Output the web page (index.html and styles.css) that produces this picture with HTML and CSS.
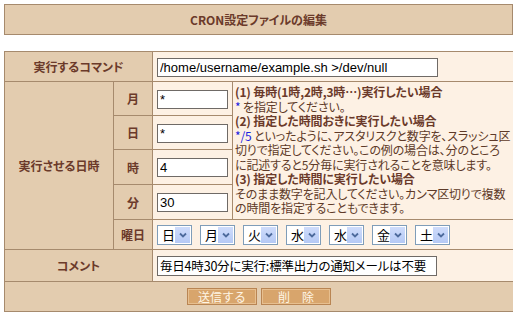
FILE: index.html
```html
<!DOCTYPE html>
<html lang="ja">
<head>
    <meta charset="UTF-8">
    <meta name="viewport" content="width=device-width, initial-scale=1.0">
    <title>CRON設定ファイルの編集</title>
    <link rel="stylesheet" href="styles.css">
</head>
<body>
    <div class="page-title">CRON設定ファイルの編集</div>

    <form class="cron-form">
        <table class="cron-table">
            <colgroup>
                <col class="col-label">
                <col class="col-sub">
                <col class="col-field">
                <col class="col-desc">
            </colgroup>
            <tr class="row-cmd">
                <th colspan="2">実行するコマンド</th>
                <td colspan="2"><input type="text" class="txt txt-cmd" value="/home/username/example.sh &gt;/dev/null"></td>
            </tr>
            <tr class="row-a">
                <th rowspan="5">実行させる日時</th>
                <th>月</th>
                <td><input type="text" class="txt txt-num" value="*"></td>
                <td rowspan="4" class="desc">
                    <b>(1) 毎時(1時,2時,3時…)実行したい場合</b><br>
                    <span class="hl">*</span> を指定してください。<br>
                    <b>(2) 指定した時間おきに実行したい場合</b><br>
                    <span class="hl">*/5</span> といったように、アスタリスクと数字を、スラッシュ区<br>切りで指定してください。この例の場合は、分のところ<br>に記述すると5分毎に実行されることを意味します。<br>
                    <b>(3) 指定した時間に実行したい場合</b><br>
                    そのまま数字を記入してください。カンマ区切りで複数<br>の時間を指定することもできます。
                </td>
            </tr>
            <tr class="row-a">
                <th>日</th>
                <td><input type="text" class="txt txt-num" value="*"></td>
            </tr>
            <tr class="row-b">
                <th>時</th>
                <td><input type="text" class="txt txt-num" value="4"></td>
            </tr>
            <tr class="row-b">
                <th>分</th>
                <td><input type="text" class="txt txt-num" value="30"></td>
            </tr>
            <tr class="row-dow">
                <th>曜日</th>
                <td colspan="2">
                    <div class="dow-list">
                        <span class="dow"><span class="dow-val">日</span><span class="dow-btn"><svg viewBox="0 0 8 6" width="8" height="6"><path d="M1 1.5 L4 4.5 L7 1.5" fill="none" stroke="#4d6a9c" stroke-width="1.8"/></svg></span></span>
                        <span class="dow"><span class="dow-val">月</span><span class="dow-btn"><svg viewBox="0 0 8 6" width="8" height="6"><path d="M1 1.5 L4 4.5 L7 1.5" fill="none" stroke="#4d6a9c" stroke-width="1.8"/></svg></span></span>
                        <span class="dow"><span class="dow-val">火</span><span class="dow-btn"><svg viewBox="0 0 8 6" width="8" height="6"><path d="M1 1.5 L4 4.5 L7 1.5" fill="none" stroke="#4d6a9c" stroke-width="1.8"/></svg></span></span>
                        <span class="dow"><span class="dow-val">水</span><span class="dow-btn"><svg viewBox="0 0 8 6" width="8" height="6"><path d="M1 1.5 L4 4.5 L7 1.5" fill="none" stroke="#4d6a9c" stroke-width="1.8"/></svg></span></span>
                        <span class="dow"><span class="dow-val">水</span><span class="dow-btn"><svg viewBox="0 0 8 6" width="8" height="6"><path d="M1 1.5 L4 4.5 L7 1.5" fill="none" stroke="#4d6a9c" stroke-width="1.8"/></svg></span></span>
                        <span class="dow"><span class="dow-val">金</span><span class="dow-btn"><svg viewBox="0 0 8 6" width="8" height="6"><path d="M1 1.5 L4 4.5 L7 1.5" fill="none" stroke="#4d6a9c" stroke-width="1.8"/></svg></span></span>
                        <span class="dow"><span class="dow-val">土</span><span class="dow-btn"><svg viewBox="0 0 8 6" width="8" height="6"><path d="M1 1.5 L4 4.5 L7 1.5" fill="none" stroke="#4d6a9c" stroke-width="1.8"/></svg></span></span>
                    </div>
                </td>
            </tr>
            <tr class="row-comment">
                <th colspan="2">コメント</th>
                <td colspan="2"><input type="text" class="txt txt-comment" value="毎日4時30分に実行:標準出力の通知メールは不要"></td>
            </tr>
            <tr class="row-actions">
                <td colspan="4">
                    <div class="actions">
                        <button type="button" class="btn">送信する</button>
                        <button type="button" class="btn">削　除</button>
                    </div>
                </td>
            </tr>
        </table>
    </form>
</body>
</html>
```

FILE: styles.css
```css
body {
    margin: 4px;
    background: #fff;
    font-family: "Noto Sans CJK JP", "DejaVu Sans", sans-serif;
    font-size: 12px;
    color: #5e3a28;
    font-feature-settings: "palt";
}
.page-title {
    height: 31px;
    box-sizing: border-box;
    border: 1px solid #a68a6d;
    background-color: #e3ccaf;
    color: #6b3a2a;
    font-weight: bold;
    display: flex;
    align-items: center;
    justify-content: center;
    margin-bottom: 16px;
}
.cron-form {
    margin: 0;
}
.cron-table {
    width: 509px;
    table-layout: fixed;
    border-collapse: collapse;
}
.col-label { width: 109px; }
.col-sub { width: 39px; }
.col-field { width: 80px; }
.col-desc { width: 281px; }
.cron-table th,
.cron-table td {
    border: 1px solid #a68a6d;
    padding: 0;
}
.cron-table th {
    background-color: #e3ccaf;
    color: #6b3a2a;
    font-weight: bold;
    text-align: center;
}
.cron-table td {
    background-color: #fdf1e4;
    padding-left: 4px;
}
.row-cmd { height: 30px; }
.row-a { height: 34px; }
.row-b { height: 35px; }
.row-dow { height: 30px; }
.row-comment { height: 32px; }
.row-actions { height: 30px; }
.cron-table td.desc {
    padding: 0 0 0 2px;
    line-height: 14.5px;
    letter-spacing: -0.15px;
    vertical-align: middle;
    white-space: nowrap;
}
.desc b {
    color: #6b3a2a;
}
.hl {
    color: #1a22e0;
}
.txt {
    box-sizing: border-box;
    height: 19px;
    margin: 0;
    padding: 0 2px;
    border: 1px solid #6f6a66;
    background: #fff;
    color: #000;
    font-family: "Liberation Sans", Arial, sans-serif;
    font-size: 13px;
    vertical-align: middle;
}
.txt-cmd { width: 281px; }
.txt-num { width: 71px; }
.txt-comment {
    width: 280px;
    height: 20px;
    font-family: "Noto Sans CJK JP", sans-serif;
    font-size: 12.5px;
    font-feature-settings: "palt";
    letter-spacing: -0.2px;
}
.dow-list {
    display: flex;
    gap: 8px;
}
.dow {
    box-sizing: border-box;
    width: 35px;
    height: 20px;
    border: 1px solid #7f9db9;
    background: #fff;
    display: flex;
    align-items: center;
    justify-content: space-between;
    padding: 1px;
}
.dow-val {
    color: #000;
    font-size: 13px;
    padding-left: 3px;
    font-weight: normal;
}
.dow-btn {
    width: 15px;
    height: 16px;
    background: linear-gradient(#cfdcfb, #b5c9f5);
    display: flex;
    align-items: center;
    justify-content: center;
}
.row-actions td {
    background-color: #e3ccaf;
    padding: 0;
}
.actions {
    display: flex;
    justify-content: center;
    gap: 4px;
}
.btn {
    box-sizing: border-box;
    width: 70px;
    height: 17px;
    margin: 0;
    padding: 0;
    border: 1px solid #b98553;
    box-shadow: inset 0 0 0 1px #e7bf8f;
    background-color: #d8a56c;
    color: #fff6e6;
    font-family: "Noto Sans CJK JP", sans-serif;
    font-size: 12px;
    line-height: 15px;
}
```
